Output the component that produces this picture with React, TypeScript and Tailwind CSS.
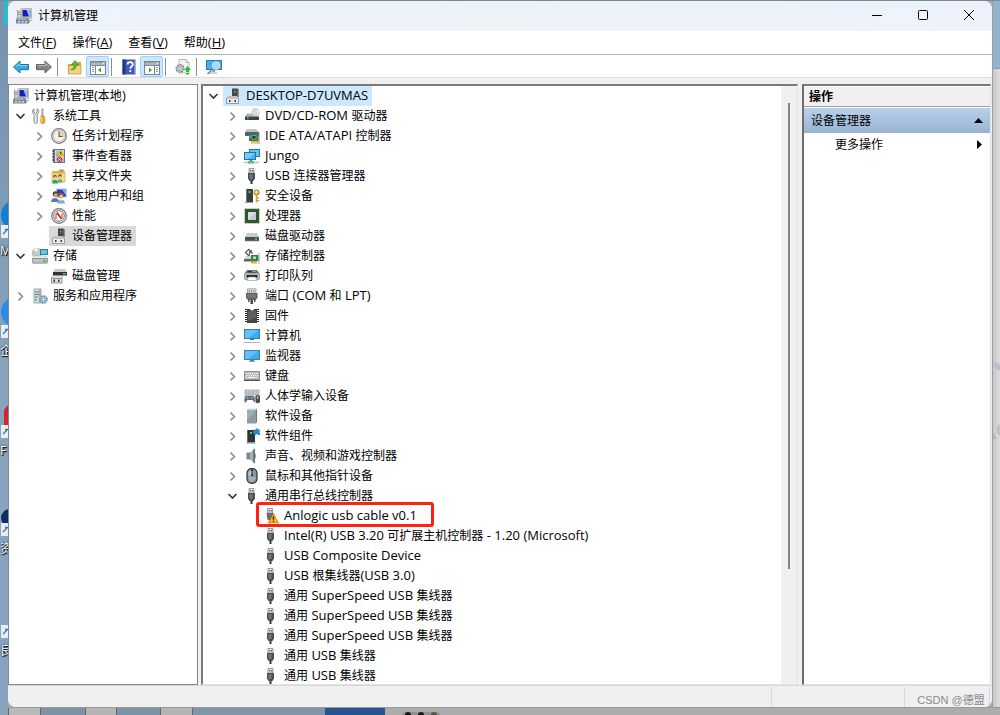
import type { ReactNode } from 'react';
import { clsx } from 'clsx';

/* ---------- icons (16 x 16) ---------- */

function Svg({ children }: { children: ReactNode }) {
  return (
    <svg viewBox="0 0 16 16" className="h-4 w-4 shrink-0" aria-hidden="true">
      {children}
    </svg>
  );
}

function ComputerManagementIcon() {
  return (
    <Svg>
      <path d="M1 2h4v7H1z" fill="#d3d5d5" />
      <path d="M1 2h1v7H1zM1 4h4v1H1zM1 6h4v1H1z" fill="#979c9f" />
      <rect x="5" y=".5" width="11" height="10" rx="1" fill="#cfcdc6" stroke="#9c9b97" strokeWidth=".6" />
      <rect x="6.500" y="2" width="8" height="6.500" fill="#1320b5" />
      <path d="M10.500 2h4v6.500h-1.500z" fill="#9dbdf8" />
      <path d="M9 10.500h4V12H9z" fill="#aeb0b0" />
      <path d="M1 9.500h10l2 2v4H0v-4z" fill="#7a8891" />
      <path d="M1.500 10.500h9v1h-9z" fill="#c6d0d5" />
      <path d="M2 13h2v1.500H2zM5.500 13h2v1.500h-2zM9 13h2v1.500H9z" fill="#d3dde2" />
      <path d="M13 12h3v1h-2v2h-1z" fill="#a9adaf" />
    </Svg>
  );
}

function ToolsIcon() {
  return (
    <Svg>
      <path d="M2 0.7v3.6l1.5 1.3L5 4.3V0.7c1.700.7 2.300 2.700 1.300 4.300L5.300 6.300V14c0 2-3.300 2-3.300 0V6.300C0 5 0 1.600 2 .7z" fill="#e8e8e8" stroke="#777" strokeWidth=".8" />
      <path d="M9.500 1h2l-.5 2v5h-1.200V3z" fill="#b8b8b8" stroke="#8b8b8b" strokeWidth=".5" />
      <path d="M9 8h3.200v2l.6 1v3.200c0 1.600-4 1.600-4 0V11l.4-1z" fill="#f4a51c" stroke="#b87412" strokeWidth=".6" />
      <path d="M9.800 9v5" stroke="#ffe08a" />
    </Svg>
  );
}

function ClockIcon() {
  return (
    <Svg>
      <circle cx="8" cy="8" r="7.300" fill="#ececec" stroke="#777" strokeWidth="1.200" />
      <circle cx="8" cy="8" r="5.500" fill="#f7f3ea" stroke="#b5b5b5" strokeWidth=".8" />
      <path d="M8 8V3a5 5 0 0 1 5 5z" fill="#f2cf85" />
      <path d="M8 3.500V8.500h3.800" fill="none" stroke="#4c5d7c" strokeWidth="1.100" />
    </Svg>
  );
}

function EventViewerIcon() {
  return (
    <Svg>
      <path d="M2 1h12v14H2z" fill="#5c7799" />
      <path d="M4 2h9v12H4z" fill="#cfdbe6" />
      <path d="M1 3h2M1 6h2M1 9h2M1 12h2" stroke="#333" />
      <path d="M5 4h3M5 6h2M5 8h2M5 11h2M11 11h2M11 13h2" stroke="#6b86a5" strokeWidth=".8" />
      <path d="M9.800 2l3.400 6H6.500z" fill="#f8c514" stroke="#c08c05" strokeWidth=".5" />
      <path d="M9.800 4v2.500" stroke="#222" />
      <circle cx="8.500" cy="11.500" r="2.700" fill="#d83c3c" />
      <path d="M7.400 10.400l2.200 2.200m0-2.200l-2.200 2.200" stroke="#fff" strokeWidth=".9" />
    </Svg>
  );
}

function SharedFoldersIcon() {
  return (
    <Svg>
      <path d="M1 3h6l1-1.500h5V3h1v11H1z" fill="#e3b64f" />
      <path d="M1 5h13v9H1z" fill="#f8dc8c" stroke="#c99b38" strokeWidth=".6" />
      <path d="M9 2.500h3" stroke="#4a83c4" />
      <circle cx="4" cy="8.500" r="1.800" fill="#70512b" />
      <circle cx="9" cy="8" r="1.800" fill="#70512b" />
      <circle cx="4.200" cy="9.400" r="1.100" fill="#f1c498" />
      <circle cx="9.200" cy="8.900" r="1.100" fill="#f1c498" />
      <path d="M1 15.500c0-5 6-5 6 0z" fill="#2da36f" />
      <path d="M6.500 14.500c0-4.500 5-4.500 5 0z" fill="#58ac8c" />
    </Svg>
  );
}

function UsersIcon() {
  return (
    <Svg>
      <rect x="5" y=".5" width="11" height="9" fill="#c8cdd2" />
      <path d="M6 1.500h9v7H6z" fill="#2540c0" />
      <path d="M11 1.500h4v6z" fill="#87abf0" />
      <circle cx="4.500" cy="6" r="2.800" fill="#5b4528" />
      <circle cx="4.800" cy="7" r="1.700" fill="#e4b088" />
      <circle cx="10" cy="7.500" r="2.700" fill="#8a6934" />
      <circle cx="10.200" cy="8.500" r="1.700" fill="#efc299" />
      <path d="M0 14c0-5.500 8-5.500 8 0z" fill="#5c77b5" />
      <path d="M6 15.500c0-5.500 8-5.500 8 0z" fill="#7fafb8" />
      <path d="M9 11.500h2l-1 2z" fill="#fff" />
    </Svg>
  );
}

function PerformanceIcon() {
  return (
    <Svg>
      <circle cx="8" cy="8" r="7.300" fill="#e9e9e9" stroke="#777" strokeWidth="1.200" />
      <circle cx="8" cy="8" r="5.300" fill="#fff" stroke="#5b5b5b" strokeWidth=".8" />
      <path d="M5 11V6l1.500.5M11 5.500V10" fill="none" stroke="#d22" />
      <path d="M6 4.500l4.500 6.500" stroke="#d11818" strokeWidth="1.500" />
    </Svg>
  );
}

function DeviceManagerIcon() {
  return (
    <Svg>
      <path d="M7 .5h5.500l1 1V9H7z" fill="#44494b" />
      <path d="M12.500.5l1 1V9h-1z" fill="#7c8082" />
      <rect x="9" y="3" width="1.500" height="1.500" fill="#3ee04d" />
      <path d="M2.500 8h9.500l1.500 2H1z" fill="#c3c3c3" />
      <path d="M1 10h13v6H1z" fill="#9a9c9d" />
      <path d="M2 10.500h11v4.500H2z" fill="#ececec" />
      <path d="M4 12h1.500v2H4zM9.500 12H11v2H9.500z" fill="#32383b" />
    </Svg>
  );
}

function StorageIcon() {
  return (
    <Svg>
      <circle cx="5" cy="5" r="4.700" fill="#c5cfcf" stroke="#86908f" strokeWidth=".6" />
      <path d="M5 5L2 1.200A5 5 0 0 1 6 .5z" fill="#f5fbfa" />
      <circle cx="5" cy="5" r="1.300" fill="#fff" stroke="#888" strokeWidth=".5" />
      <path d="M8 1h8v6H8z" fill="#2d7da1" />
      <path d="M9 2h6v4H9z" fill="#64c4ea" />
      <path d="M2 8h12l2 2.500H0z" fill="#eee" stroke="#999" strokeWidth=".4" />
      <rect x=".4" y="10.500" width="15.200" height="4.700" rx=".8" fill="#bfc4c5" stroke="#666" strokeWidth=".6" />
      <path d="M11 12h3v2h-3z" fill="#35d23c" />
    </Svg>
  );
}

function DiskManagementIcon() {
  return (
    <Svg>
      <path d="M4 1h10l2 3H2z" fill="#c5c9ca" />
      <path d="M2 4h14v3.500H2z" fill="#303638" />
      <path d="M12 5h2.500v1.500H12z" fill="#36db44" />
      <path d="M1 8h10l1 2H0z" fill="#eee" stroke="#999" strokeWidth=".4" />
      <path d="M0 10h11.500v5.500H0z" fill="#909394" />
      <path d="M1 11h9.500v3.500H1z" fill="#e3e3e3" />
      <path d="M2.500 11.500H4V14H2.500zM7 11.500h1.500V14H7z" fill="#333" />
    </Svg>
  );
}

function ServicesIcon() {
  return (
    <Svg>
      <path d="M2 1h7v14H2z" fill="#d7dddf" stroke="#7c8a91" strokeWidth=".7" />
      <path d="M7 1h2v14H7z" fill="#a3afb5" />
      <path d="M3 4h4M3 6.500h4M3 9h3" stroke="#65747c" />
      <rect x="3" y="11" width="2" height="1.500" fill="#3bc848" />
      <circle cx="11.500" cy="11.500" r="3.700" fill="#94b5d0" stroke="#5c83a5" strokeWidth="1.300" strokeDasharray="1.600 1.300" />
      <circle cx="11.500" cy="11.500" r="2.700" fill="#a9c4dc" />
      <circle cx="11.500" cy="11.500" r="1.300" fill="#fff" stroke="#5e85a7" strokeWidth=".6" />
    </Svg>
  );
}

function DvdIcon() {
  return (
    <Svg>
      <path d="M3 5.500h9l3 3H1z" fill="#b3b6b8" />
      <circle cx="11.500" cy="4.200" r="3.800" fill="#dfe2e4" stroke="#b4babd" strokeWidth=".6" />
      <path d="M11.500 4.200L14 1.700a4 4 0 0 1 1 2.700z" fill="#fff" />
      <circle cx="11.500" cy="4.200" r="1.100" fill="#fff" stroke="#aaa" strokeWidth=".6" />
      <rect x="1" y="8.500" width="14" height="3.500" rx=".7" fill="#3d4244" />
      <path d="M3 9.500h1.500V11H3z" fill="#3be34b" />
    </Svg>
  );
}

function IdeIcon() {
  return (
    <Svg>
      <path d="M3 1h9l3 3H1z" fill="#bfc2c4" />
      <rect x="1" y="4" width="14" height="4" rx=".7" fill="#595e60" />
      <path d="M5 6h9.500v7H5z" fill="#2f7a55" />
      <path d="M8 7.500h4V11H8z" fill="#173f2b" stroke="#9bd7b4" strokeWidth=".6" />
      <path d="M6 7v3" stroke="#8bd8a9" strokeWidth=".8" />
      <path d="M7 13h7v2.500H7z" fill="#efa82c" />
      <path d="M9 13v2M12 13v2" stroke="#fff" strokeWidth=".6" />
      <path d="M15 5v11" stroke="#868b8d" />
    </Svg>
  );
}

function NetworkMonitorsIcon() {
  return (
    <Svg>
      <path d="M5 1h11v8H5z" fill="#2378ac" />
      <path d="M6 2h9v6H6z" fill="#61c4f5" />
      <path d="M0 4h12v8H0z" fill="#1f74aa" />
      <path d="M1 5h10v6H1z" fill="#45b5f8" />
      <path d="M1 5h10L4 11H1z" fill="#77ccfb" />
      <path d="M6 12h2v1H6z" fill="#39944d" />
      <path d="M0 14.500h15" stroke="#b6c2bb" strokeWidth="1.500" />
      <path d="M4 13h6v2.500H4z" fill="#55c765" />
    </Svg>
  );
}

function UsbIcon() {
  return (
    <Svg>
      <path d="M5 .5h5V5H5z" fill="#e3e3e3" stroke="#777" strokeWidth=".7" />
      <path d="M6.200 2h1v1.500h-1zM8.200 2h1v1.500h-1z" fill="#444" />
      <path d="M4 5h7v5.500L9.500 13h-4L4 10.500z" fill="#4c4f50" />
      <path d="M5.500 6h3v5h-3z" fill="#737677" />
      <path d="M6.500 13h2v3h-2z" fill="#333" />
    </Svg>
  );
}

function UsbWarningIcon() {
  return (
    <Svg>
      <path d="M4.500.5h5V5h-5z" fill="#e3e3e3" stroke="#777" strokeWidth=".7" />
      <path d="M5.700 2h1v1.500h-1zM7.700 2h1v1.500h-1z" fill="#444" />
      <path d="M3.500 5h7v4L7 13 4.500 11.500z" fill="#686b6c" />
      <path d="M10.500 5.500L15.600 15H5.200z" fill="#ffb21c" stroke="#b47406" strokeWidth=".7" />
      <path d="M10.400 8.500v3.200M10.400 12.700v1.300" stroke="#222" strokeWidth="1.300" />
    </Svg>
  );
}

function SecurityIcon() {
  return (
    <Svg>
      <path d="M2 1h7v13H2z" fill="#383d3f" />
      <path d="M2 1h1v13H2z" fill="#777" />
      <path d="M4.500 3h2v2h-2z" fill="#39e54c" />
      <path d="M1 14.500h8" stroke="#999" />
      <circle cx="12.500" cy="4.500" r="2.400" fill="#f3cf82" stroke="#b88930" strokeWidth="1.200" />
      <path d="M11.700 7h1.800v7.500h-1.800z" fill="#d6a548" />
      <path d="M13 10h2M13 12.500h2" stroke="#c28e2e" />
      <circle cx="12.500" cy="3.800" r=".7" fill="#fff" />
    </Svg>
  );
}

function CpuIcon() {
  return (
    <Svg>
      <rect x=".5" y=".5" width="15" height="15" fill="none" stroke="#b39b4d" strokeDasharray="1 1" />
      <path d="M1 1h14v14H1z" fill="#27583f" />
      <path d="M4 4h8v8H4z" fill="#dcdedd" />
      <path d="M12 4v8H4z" fill="#c6c9c8" />
    </Svg>
  );
}

function DriveIcon() {
  return (
    <Svg>
      <path d="M3 5h10l2 4H1z" fill="#c8cbcc" />
      <rect x="1" y="9" width="14" height="4" rx=".6" fill="#4c5153" />
      <path d="M11 10.300h2v1.500h-2z" fill="#3ae34a" />
      <path d="M1.500 13h13" stroke="#8d8d8d" strokeWidth=".7" />
    </Svg>
  );
}

function StorageControllerIcon() {
  return (
    <Svg>
      <path d="M8.500 5.500L4.800 1.300 1.500 4.500 5 8M5.500 3.500v4M8 2.500l-2 2" fill="none" stroke="#4f5457" strokeWidth="1.200" />
      <path d="M2 8h5l1 3H0z" fill="#d1d4d5" />
      <path d="M0 11h8v2.500H0z" fill="#5d6467" />
      <path d="M7 7h7.500v6H7z" fill="#2f8055" />
      <path d="M9 8.500h3V11H9z" fill="#b6dfc6" />
      <path d="M7 13h6v2.500H7z" fill="#f0a622" />
      <path d="M15 5v11" stroke="#9da1a3" />
    </Svg>
  );
}

function PrinterIcon() {
  return (
    <Svg>
      <path d="M3 2h10l2 3H1z" fill="#6a7073" />
      <path d="M4 3h8v1.500H4z" fill="#2d3435" />
      <path d="M8 3.500h4" stroke="#47c684" />
      <rect x=".3" y="5" width="15.400" height="6.500" rx="1" fill="#b6bdc3" stroke="#767c80" strokeWidth=".6" />
      <path d="M2.500 7h11v2.500h-11z" fill="#26292a" />
      <path d="M4.500 9h7l1.500 3.500H3z" fill="#fff" stroke="#8f9597" strokeWidth=".6" />
    </Svg>
  );
}

function PortIcon() {
  return (
    <Svg>
      <path d="M3.500.8h8.500V5H3.500z" fill="#e0e0e0" stroke="#888" strokeWidth=".7" />
      <path d="M5 2h1v2H5zM7.200 2h1v2h-1zM9.500 2h1v2h-1z" fill="#888" />
      <path d="M2 5h11.500v5l-2 2H4l-2-2z" fill="#5f6364" />
      <path d="M3 7h9M3 9h9" stroke="#9a9d9e" strokeWidth=".7" />
      <path d="M4 11v3h1.500v-2M11.500 11v3H10v-2" fill="#555" />
      <path d="M6.500 12h2.500v4H6.500z" fill="#494c4d" />
    </Svg>
  );
}

function FirmwareIcon() {
  return (
    <Svg>
      <path d="M2 1v14M14 1v14" stroke="#222" strokeWidth="2" strokeDasharray="1 1" />
      <path d="M3 1h3l1 1.500h2L10 1h3v14H3z" fill="#444748" />
      <path d="M4 3.500l8-1v7L4 13z" fill="#5e6162" />
    </Svg>
  );
}

function ComputerIcon() {
  return (
    <Svg>
      <path d="M0 1h16v10H0z" fill="#3f7ea8" />
      <path d="M1 2h14v8H1z" fill="#38acf8" />
      <path d="M1 2h13L5 10H1z" fill="#63c0fc" />
      <path d="M6 11h4v1H6z" fill="#3d6787" />
      <path d="M0 14.500h16" stroke="#aeb9c0" />
    </Svg>
  );
}

function MonitorIcon() {
  return (
    <Svg>
      <path d="M0 2h16v10H0z" fill="#3f7ea8" />
      <path d="M1 3h14v8H1z" fill="#38acf8" />
      <path d="M1 3h13L5 11H1z" fill="#63c0fc" />
      <path d="M6 12h4v1H6z" fill="#6d7d87" />
      <path d="M5 13.500h6" stroke="#8f9da6" />
    </Svg>
  );
}

function KeyboardIcon() {
  return (
    <Svg>
      <path d="M0 3h16v9H0z" fill="#8a9195" />
      <path d="M1 4h14v7H1z" fill="#b9bfc2" />
      <path d="M2 5.500h12M2 9.500h12" stroke="#f4f6f7" strokeDasharray="1 1" />
      <path d="M3 7.500h11" stroke="#f4f6f7" strokeDasharray="1 1" />
      <path d="M5 9.500h6" stroke="#fff" />
      <path d="M0 12.500h16" stroke="#555" />
    </Svg>
  );
}

function HidIcon() {
  return (
    <Svg>
      <path d="M1 2h14v8H1z" fill="#cfd4d6" stroke="#949b9e" strokeWidth=".7" />
      <path d="M2 4h12M2.500 6h11M2 8h8" stroke="#757d81" strokeDasharray="1 1" />
      <path d="M2 8h7c1.500 1 2.500 4 1.800 6.500L8.500 12h-5L1 15C-.2 12.500.5 9.500 2 8z" fill="#596a79" />
      <path d="M2.500 10h2M7 10h1.500" stroke="#cde0ef" />
      <rect x="11.500" y="7" width="4.500" height="8.300" rx="2" fill="#464b4f" />
      <path d="M13.700 8v3" stroke="#dce2e5" />
    </Svg>
  );
}

function SoftwareDeviceIcon() {
  return (
    <Svg>
      <path d="M4 .5h9l-1 1.500H3z" fill="#d3d7d9" />
      <path d="M3 2h9v13.500H3z" fill="#929a9f" />
      <path d="M12 2l1-1.500V14l-1 1.500z" fill="#6d777d" />
      <path d="M3 2h9L3 12z" fill="#a2abb0" />
      <path d="M7 5h2v2H7z" fill="#42d8ef" />
    </Svg>
  );
}

function SoftwareComponentIcon() {
  return (
    <Svg>
      <path d="M3 2h8v12.500H3z" fill="#303436" />
      <path d="M3 2h1v12.500H3z" fill="#6b7072" />
      <path d="M6 4h2v2H6z" fill="#39e54c" />
      <path d="M2.500 15h9" stroke="#8c8c8c" />
      <path d="M10 1.500h2V.5h2v1h2v2h-1v1h1v2.500h-2V6h-1.500v1H10V5H9V3h1z" fill="#2b86d3" />
    </Svg>
  );
}

function SpeakerIcon() {
  return (
    <Svg>
      <path d="M2.500 4.500H6v7H2.500z" fill="#7d868b" />
      <path d="M6 4.500l5-4v15l-5-4z" fill="#a9b1b5" />
      <path d="M9 2.100L11 .5v15l-2-1.600z" fill="#6b767c" />
      <path d="M11 5c1.800 1.500 1.800 4.500 0 6z" fill="#9da5a9" />
    </Svg>
  );
}

function MouseIcon() {
  return (
    <Svg>
      <rect x="3" y=".7" width="10" height="14.600" rx="4.500" fill="#8797a0" stroke="#30373b" strokeWidth="1.200" />
      <path d="M5 3.500C6 2 7 2 7.300 2v6H4.500V5z" fill="#b9c8d0" />
      <path d="M8 1.500V8" stroke="#252c30" strokeWidth="1.700" />
      <path d="M8 3v3" stroke="#a4dbf5" strokeWidth=".7" />
      <path d="M4.500 9c.5 6 6.500 6 7 0z" fill="#a5b1b8" />
    </Svg>
  );
}

/* ---------- toolbar icons ---------- */

function ArrowIcon({ fill, stroke, flip }: { fill: string; stroke: string; flip?: boolean }) {
  return (
    <Svg>
      <g transform={flip ? 'translate(16 0) scale(-1 1)' : undefined}>
        <path d="M.5 8L7 2v3.500h8.500v5.200H7V14z" fill={fill} stroke={stroke} />
        <path d="M3 7.500l3.200-3V6.500h8" fill="none" stroke="#fff" strokeOpacity=".45" />
      </g>
    </Svg>
  );
}

function FolderUpIcon() {
  return (
    <Svg>
      <path d="M1 5h5l1-2h7v12H1z" fill="#d8a943" />
      <path d="M1.500 6.500h12.500v8.500H1.500z" fill="#f5d47d" stroke="#b98d32" strokeWidth=".7" />
      <path d="M3.500 10.500C7 10 7 8 7 5.500H4.500L8 1.500 11.500 5.500H9.500c0 4-2.500 6-6 5z" fill="#4fc43a" stroke="#2b8a22" strokeWidth=".6" />
    </Svg>
  );
}

function PaneIcon({ right }: { right?: boolean }) {
  return (
    <Svg>
      <rect x=".5" y="2.500" width="15" height="13" fill="#fff" stroke="#7d8790" />
      <path d="M1 3h14v3H1z" fill="#b3bbc1" />
      <path d="M1 3.500h11" stroke="#929ca5" />
      <path d="M13 4h1v1h-1z" fill="#fff" />
      <path d="M1 6.500h14" stroke="#7d8790" />
      {right ? (
        <>
          <path d="M10.500 7v8" stroke="#7d8790" />
          <path d="M12 8.500h2M12 10.500h2M12 12.500h2" stroke="#8d969d" />
          <path d="M5 8.500l3 2.500-3 2.500z" fill="#35a83b" />
        </>
      ) : (
        <>
          <path d="M5.500 7v8" stroke="#7d8790" />
          <path d="M2 8.500h2M2 10.500h2M2 12.500h2" stroke="#8d969d" />
          <path d="M11 8.500L8 11l3 2.500z" fill="#35a83b" />
        </>
      )}
    </Svg>
  );
}

function HelpIcon() {
  return (
    <Svg>
      <path d="M1.500.5h13v15h-13z" fill="#3c5bbd" />
      <path d="M1.500.5h3v15h-3z" fill="#25397f" />
      <path d="M14 .5v15" stroke="#a9b5dd" />
      <path d="M6.500 5.500c0-3.300 5.300-3.300 5.300 0 0 2-2.500 2-2.500 4.200M9.300 11v2" fill="none" stroke="#fff" strokeWidth="1.700" />
    </Svg>
  );
}

function GearPageIcon() {
  return (
    <Svg>
      <path d="M4 .5h7l3 3V14H4z" fill="#f2f2f2" stroke="#aaa" strokeWidth=".8" />
      <path d="M11 .5v3h3" fill="#ddd" stroke="#aaa" strokeWidth=".8" />
      <circle cx="5" cy="9.500" r="3.800" fill="#b4b4b4" stroke="#808080" strokeWidth="1.500" strokeDasharray="1.700 1.200" />
      <circle cx="5" cy="9.500" r="2.700" fill="#c8c8c8" />
      <circle cx="5" cy="9.500" r="1.200" fill="#fff" stroke="#888" strokeWidth=".6" />
      <path d="M12.500 7l3.500 4h-2v2h-3v-2H9zM11 14h3v1.500h-3z" fill="#26bd3d" />
    </Svg>
  );
}

function ScanIcon() {
  return (
    <Svg>
      <path d="M0 1h16v10H0z" fill="#287fb8" />
      <path d="M1 2h14v8H1z" fill="#3fb1f2" />
      <path d="M6 11h3v2H6zM3 13.500h8v1H3z" fill="#9aa9b2" />
      <circle cx="10" cy="6.500" r="4" fill="#a5dbf8" stroke="#dbe3e7" strokeWidth="1" />
      <circle cx="10" cy="6.500" r="4.600" fill="none" stroke="#6c8798" strokeWidth=".5" />
      <path d="M7 9.500L1.500 15" stroke="#7c8d98" strokeWidth="1.700" />
    </Svg>
  );
}

/* ---------- tree ---------- */

type Node = {
  label: string;
  icon: ReactNode;
  depth: number;
  state?: 'open' | 'closed';
  selected?: boolean;
  marked?: boolean;
};

const consoleTree: Node[] = [
  { label: '计算机管理(本地)', icon: <ComputerManagementIcon />, depth: 0 },
  { label: '系统工具', icon: <ToolsIcon />, depth: 1, state: 'open' },
  { label: '任务计划程序', icon: <ClockIcon />, depth: 2, state: 'closed' },
  { label: '事件查看器', icon: <EventViewerIcon />, depth: 2, state: 'closed' },
  { label: '共享文件夹', icon: <SharedFoldersIcon />, depth: 2, state: 'closed' },
  { label: '本地用户和组', icon: <UsersIcon />, depth: 2, state: 'closed' },
  { label: '性能', icon: <PerformanceIcon />, depth: 2, state: 'closed' },
  { label: '设备管理器', icon: <DeviceManagerIcon />, depth: 2, selected: true },
  { label: '存储', icon: <StorageIcon />, depth: 1, state: 'open' },
  { label: '磁盘管理', icon: <DiskManagementIcon />, depth: 2 },
  { label: '服务和应用程序', icon: <ServicesIcon />, depth: 1, state: 'closed' },
];

const deviceTree: Node[] = [
  { label: 'DESKTOP-D7UVMAS', icon: <DeviceManagerIcon />, depth: 0, state: 'open', selected: true },
  { label: 'DVD/CD-ROM 驱动器', icon: <DvdIcon />, depth: 1, state: 'closed' },
  { label: 'IDE ATA/ATAPI 控制器', icon: <IdeIcon />, depth: 1, state: 'closed' },
  { label: 'Jungo', icon: <NetworkMonitorsIcon />, depth: 1, state: 'closed' },
  { label: 'USB 连接器管理器', icon: <UsbIcon />, depth: 1, state: 'closed' },
  { label: '安全设备', icon: <SecurityIcon />, depth: 1, state: 'closed' },
  { label: '处理器', icon: <CpuIcon />, depth: 1, state: 'closed' },
  { label: '磁盘驱动器', icon: <DriveIcon />, depth: 1, state: 'closed' },
  { label: '存储控制器', icon: <StorageControllerIcon />, depth: 1, state: 'closed' },
  { label: '打印队列', icon: <PrinterIcon />, depth: 1, state: 'closed' },
  { label: '端口 (COM 和 LPT)', icon: <PortIcon />, depth: 1, state: 'closed' },
  { label: '固件', icon: <FirmwareIcon />, depth: 1, state: 'closed' },
  { label: '计算机', icon: <ComputerIcon />, depth: 1, state: 'closed' },
  { label: '监视器', icon: <MonitorIcon />, depth: 1, state: 'closed' },
  { label: '键盘', icon: <KeyboardIcon />, depth: 1, state: 'closed' },
  { label: '人体学输入设备', icon: <HidIcon />, depth: 1, state: 'closed' },
  { label: '软件设备', icon: <SoftwareDeviceIcon />, depth: 1, state: 'closed' },
  { label: '软件组件', icon: <SoftwareComponentIcon />, depth: 1, state: 'closed' },
  { label: '声音、视频和游戏控制器', icon: <SpeakerIcon />, depth: 1, state: 'closed' },
  { label: '鼠标和其他指针设备', icon: <MouseIcon />, depth: 1, state: 'closed' },
  { label: '通用串行总线控制器', icon: <UsbIcon />, depth: 1, state: 'open' },
  { label: 'Anlogic usb cable v0.1', icon: <UsbWarningIcon />, depth: 2, marked: true },
  { label: 'Intel(R) USB 3.20 可扩展主机控制器 - 1.20 (Microsoft)', icon: <UsbIcon />, depth: 2 },
  { label: 'USB Composite Device', icon: <UsbIcon />, depth: 2 },
  { label: 'USB 根集线器(USB 3.0)', icon: <UsbIcon />, depth: 2 },
  { label: '通用 SuperSpeed USB 集线器', icon: <UsbIcon />, depth: 2 },
  { label: '通用 SuperSpeed USB 集线器', icon: <UsbIcon />, depth: 2 },
  { label: '通用 SuperSpeed USB 集线器', icon: <UsbIcon />, depth: 2 },
  { label: '通用 USB 集线器', icon: <UsbIcon />, depth: 2 },
  { label: '通用 USB 集线器', icon: <UsbIcon />, depth: 2 },
];

// Latin runs are set one pixel larger than the Chinese ones
function MixedText({ text }: { text: string }) {
  return (
    <span className="whitespace-pre">
      {text.split(/([\u3000-\u9fff]+)/).map((part, i) =>
        i % 2 === 1 ? part : <span key={i} className="font-['Open_Sans',sans-serif] text-[13px]">{part}</span>,
      )}
    </span>
  );
}

function Chevron({ open }: { open: boolean }) {
  return (
    <svg viewBox="0 0 16 16" className="h-4 w-4" fill="none" aria-hidden="true">
      {open ? (
        <path d="M4.500 6l4 4 4-4" stroke="#333" strokeWidth="1.600" />
      ) : (
        <path d="M6.500 4.500l4 4-4 4" stroke="#8a8a8a" strokeWidth="1.600" />
      )}
    </svg>
  );
}

const indents = ['pl-[2px]', 'pl-[21px]', 'pl-10'];
const consoleIndents = ['pl-[2px]', 'pl-[3px]', 'pl-[22px]'];

function Tree({ nodes, indent, hideRootToggle, label }: { nodes: Node[]; indent: string[]; hideRootToggle?: boolean; label: string }) {
  return (
    <ul aria-label={label}>
      {nodes.map((node, i) => (
        <li key={i} className={clsx('flex h-5 items-center gap-[2px]', indent[node.depth])}>
          {node.state ? (
            <button type="button" className="h-4 w-4 shrink-0" aria-label={node.label} aria-expanded={node.state === 'open'}>
              <Chevron open={node.state === 'open'} />
            </button>
          ) : (
            !(hideRootToggle && node.depth === 0) && <span className="w-4 shrink-0" />
          )}
          <div
            className={clsx(
              'relative flex h-5 items-center gap-[5px] pl-[2px] pr-1',
              node.selected && (node.depth === 0 ? 'bg-[#cce8ff]' : 'bg-[#d9d9d9]'),
            )}
          >
            {node.icon}
            <MixedText text={node.label} />
            {node.marked && (
              <span className="absolute -left-[5px] -top-1 h-[25px] w-[178px] rounded-[3px] border-3 border-[#ff2212]" />
            )}
          </div>
        </li>
      ))}
    </ul>
  );
}

/* ---------- window parts ---------- */

function TitleBar() {
  return (
    <header className="flex h-[30px] shrink-0 items-center bg-gradient-to-r from-[#eff2fb] via-[#ecf4f8] to-[#eff2fb] pl-2">
      <ComputerManagementIcon />
      <h1 className="ml-[6px] flex-1 pb-px">计算机管理</h1>
      <button type="button" aria-label="最小化" className="flex h-full w-[46px] items-center justify-center">
        <svg viewBox="0 0 12 12" className="h-3 w-3" stroke="#000" fill="none"><path d="M1 5.500h10" /></svg>
      </button>
      <button type="button" aria-label="最大化" className="flex h-full w-[46px] items-center justify-center">
        <svg viewBox="0 0 12 12" className="h-3 w-3" stroke="#000" fill="none"><rect x="1.500" y=".5" width="9" height="9" rx="1" /></svg>
      </button>
      <button type="button" aria-label="关闭" className="flex h-full w-[46px] items-center justify-center">
        <svg viewBox="0 0 12 12" className="h-3 w-3" stroke="#000" fill="none"><path d="M1 0l10 10M11 0L1 10" /></svg>
      </button>
    </header>
  );
}

const menus = [
  ['文件', 'F'],
  ['操作', 'A'],
  ['查看', 'V'],
  ['帮助', 'H'],
];

function MenuBar() {
  return (
    <nav className="flex h-6 shrink-0 items-center border-b border-[#b4b4b4] bg-white pl-[2px]">
      {menus.map(([name, key]) => (
        <button key={key} type="button" className="px-2">
          {name}
          <span className="font-['Open_Sans',sans-serif] text-[13px]">
            (<u className="underline-offset-1">{key}</u>)
          </span>
        </button>
      ))}
    </nav>
  );
}

function ToolButton({ label, active, children }: { label: string; active?: boolean; children: ReactNode }) {
  return (
    <button
      type="button"
      aria-label={label}
      className={clsx(
        'flex h-[21px] w-[23px] items-center justify-center',
        active && 'rounded-[2px] border border-[#99d1ff] bg-[#cce8ff]',
      )}
    >
      {children}
    </button>
  );
}

function Separator() {
  return <span className="ml-[2px] mr-[5px] h-[18px] w-px bg-[#8d8d8d]" />;
}

function ToolBar() {
  return (
    <div className="flex h-[23px] shrink-0 items-center border-b border-[#dcdcdc] bg-white pl-px pt-px">
      <ToolButton label="后退"><ArrowIcon fill="#36a9ee" stroke="#1c6ea8" /></ToolButton>
      <ToolButton label="前进"><ArrowIcon fill="#858585" stroke="#636363" flip /></ToolButton>
      <Separator />
      <ToolButton label="上一级"><FolderUpIcon /></ToolButton>
      <ToolButton label="显示/隐藏控制台树" active><PaneIcon /></ToolButton>
      <Separator />
      <ToolButton label="帮助"><HelpIcon /></ToolButton>
      <ToolButton label="显示/隐藏操作窗格" active><PaneIcon right /></ToolButton>
      <Separator />
      <ToolButton label="更新驱动程序"><GearPageIcon /></ToolButton>
      <Separator />
      <ToolButton label="扫描检测硬件改动"><ScanIcon /></ToolButton>
    </div>
  );
}

function ActionsPane() {
  return (
    <aside className="mx-px w-[189px] shrink-0 border-b border-r border-[#e3e3e3] border-l-2 border-l-[#6e6e6e] border-t-2 border-t-[#7a7a7a] bg-white">
      <h2 className="mt-px flex h-5 items-center border-b border-[#a0a0a0] bg-[#f0f0f0] pl-[5px] font-bold">操作</h2>
      <button type="button" className="mt-px flex h-[25px] w-full items-center justify-between bg-gradient-to-b from-[#b9d1ea] to-[#98b3d2] pl-[7px] pr-[7px]">
        设备管理器
        <svg viewBox="0 0 9 5" className="h-[5px] w-[9px]"><path d="M0 5l4.500-5L9 5z" /></svg>
      </button>
      <button type="button" className="flex h-[23px] w-full items-center justify-between pl-[31px] pr-2">
        更多操作
        <svg viewBox="0 0 5 9" className="h-[9px] w-[5px]"><path d="M0 0l5 4.500L0 9z" /></svg>
      </button>
    </aside>
  );
}

function StatusBar() {
  return (
    <footer className="flex h-[22px] shrink-0 border-t border-[#d7d7d7] bg-[#f0f0f0] pr-[2px] pt-px">
      <span className="flex-1" />
      <span className="w-[133px] border-l border-[#d7d7d7]" />
      <span className="flex w-[86px] items-center justify-center border-x border-[#d7d7d7] pl-2 pt-[7px] font-['Liberation_Sans','Noto_Sans_CJK_SC',sans-serif] text-[11px] whitespace-nowrap text-[#8b8b8b]">
        CSDN @德盟
      </span>
    </footer>
  );
}

/* ---------- desktop behind the window ---------- */

// The labels run on underneath the window
function Shortcut({ className, label, children }: { className: string; label: string; children?: ReactNode }) {
  return (
    <div className={clsx('absolute left-0 w-4', className)}>
      <svg viewBox="0 0 8 42" className="h-[42px] w-2">
        {children}
        <rect x="1" y="28" width="12" height="13" fill="#e9edf0" />
        <path d="M3 37l4-4M5 32.500h3" stroke="#2c7fc4" strokeWidth="1.300" />
      </svg>
      <span className="mt-1 block leading-4 text-white [text-shadow:0_0_2px_#000,1px_1px_1px_#000]">{label}</span>
    </div>
  );
}

function DesktopLeft() {
  return (
    <div className="relative w-2 shrink-0 bg-gradient-to-b from-[#7392ac] via-[#87a3bb] to-[#86a3c0]">
      <div className="absolute left-1 top-0 h-6 w-1 bg-[#2bb9cd]" />
      <Shortcut className="top-[196px]" label="M"><circle cx="16" cy="18" r="15" fill="#0e7fd6" /></Shortcut>
      <Shortcut className="top-[296px]" label="企"><circle cx="16" cy="15" r="15" fill="#2a8ce8" /></Shortcut>
      <Shortcut className="top-[396px]" label="F"><path d="M4 13l4-5v20H4z" fill="#d1262c" /></Shortcut>
      <Shortcut className="top-[494px]" label="资"><circle cx="10" cy="23" r="9" fill="#0b2f63" /></Shortcut>
      <Shortcut className="top-[596px]" label="良" />
    </div>
  );
}

function DesktopRight() {
  return (
    <div className="flex w-2 shrink-0 flex-col border-l border-[#9d9d9d]">
      <div className="h-[68px] border-b border-[#7fa2bf] bg-[#93b2cb]" />
      <div className="flex-1 bg-gradient-to-r from-[#c9c9c9] to-[#dcdcdc]">
        <svg viewBox="0 0 7 400" className="h-[400px] w-[7px]" fill="none">
          <path d="M0 295l8 4" stroke="#bcc0c6" strokeWidth="6" />
          <circle cx="10" cy="361" r="5" stroke="#c0c0c0" strokeWidth="3" />
          <path d="M0 363l4 7H0z" fill="#b9b9b9" />
        </svg>
      </div>
    </div>
  );
}

function DesktopBottom() {
  return (
    <div className="flex h-2 shrink-0 overflow-hidden border-t border-[#999] bg-[#acacac]">
      <div className="w-2 bg-[#86a3c0]" />
      <div className="w-[33px] border-x border-[#666] bg-[#b9b9b9]" />
      <div className="w-11 bg-[#7e92a5]" />
      <div className="w-8 border-x border-[#666] bg-[#b4b4b4]" />
      <div className="w-[43px] bg-[#7e92a5]" />
      <div className="w-[33px] border-x border-[#666] bg-[#b4b4b4]" />
      <div className="w-[132px] bg-[#8195a7]" />
      <div className="w-[60px] bg-[#27548f]" />
      <svg viewBox="0 0 56 7" className="h-[7px] w-14">
        <rect x="17" y="4" width="38" height="8" rx="4" fill="#8b9298" />
        <circle cx="23" cy="7" r="3" fill="#16181a" />
        <circle cx="36" cy="7" r="3" fill="#16181a" />
        <circle cx="49" cy="7" r="3" fill="#5c5344" />
      </svg>
    </div>
  );
}

export default function App() {
  return (
    <div className="flex h-screen flex-col overflow-hidden bg-[#a3abb3] font-['Noto_Sans','Noto_Sans_CJK_SC',sans-serif] text-xs text-black">
      <div className="h-px shrink-0 bg-[#76899c]" />
      <div className="flex min-h-0 flex-1">
        <DesktopLeft />
        <div className="relative flex min-w-0 flex-1 flex-col overflow-hidden rounded-lg bg-[#f0f0f0]">
          <TitleBar />
          <MenuBar />
          <ToolBar />
          <main className="flex min-h-0 flex-1 gap-[3px] pt-[6px]">
            <section className="w-[190px] shrink-0 overflow-hidden border border-[#828790] bg-white pt-px">
              <Tree nodes={consoleTree} indent={consoleIndents} hideRootToggle label="控制台树" />
            </section>
            <section className="flex min-w-0 flex-1 overflow-hidden border-b border-r border-[#e3e3e3] border-l-2 border-l-[#7a7a7a] border-t-2 border-t-[#7a7a7a] bg-white">
              <div className="min-w-0 flex-1 overflow-hidden">
                <Tree nodes={deviceTree} indent={indents} label="设备" />
              </div>
              <div className="flex w-4 shrink-0 flex-col items-center bg-[#f0f0f0] pt-[17px] pb-[115px]">
                <div className="w-[2px] flex-1 bg-[#858585]" />
              </div>
            </section>
            <ActionsPane />
          </main>
          <StatusBar />
        </div>
        <DesktopRight />
      </div>
      <DesktopBottom />
    </div>
  );
}
